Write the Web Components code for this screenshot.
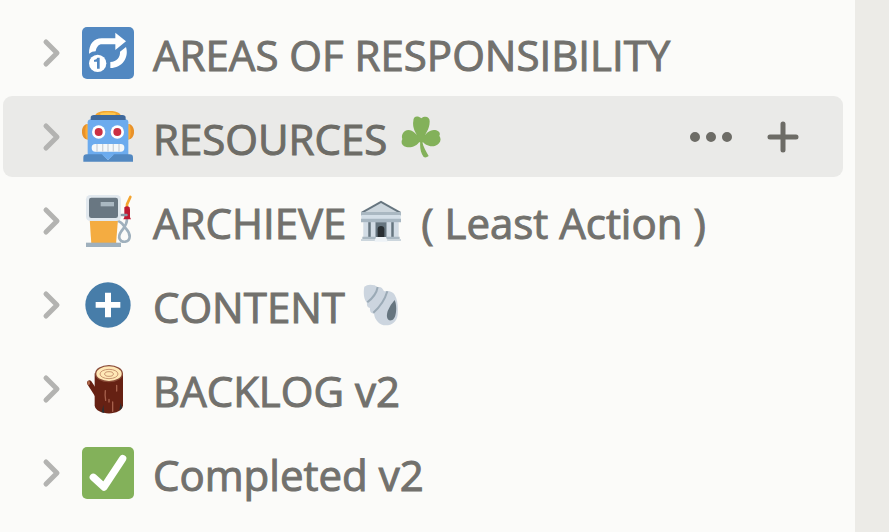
<!DOCTYPE html>
<html lang="en">
<head>
<meta charset="utf-8">
<title>Pages</title>
<style>
  body {
    margin: 0;
    font-family: "Open Sans", "Noto Sans", sans-serif;
  }
</style>
</head>
<body>
<page-sidebar>
  <page-item>
    <page-icon slot="icon" name="repeat-one"></page-icon>
    AREAS OF RESPONSIBILITY
  </page-item>
  <page-item active>
    <page-icon slot="icon" name="robot"></page-icon>
    RESOURCES <page-icon name="shamrock" inline></page-icon>
  </page-item>
  <page-item>
    <page-icon slot="icon" name="fuel"></page-icon>
    ARCHIEVE <page-icon name="bank" inline></page-icon> ( Least Action )
  </page-item>
  <page-item>
    <page-icon slot="icon" name="plus"></page-icon>
    CONTENT <page-icon name="shell" inline></page-icon>
  </page-item>
  <page-item>
    <page-icon slot="icon" name="wood"></page-icon>
    BACKLOG v2
  </page-item>
  <page-item>
    <page-icon slot="icon" name="check"></page-icon>
    Completed v2
  </page-item>
</page-sidebar>

<script>
const icons = {
  'repeat-one': `<svg viewBox="156 36 156 156">
    <rect x="156" y="36" width="156" height="156" rx="15" fill="#5288c1"/>
    <g fill="#fff">
      <path d="M177 116C177 86 192 70 215 70H256V53L288 79L256 105V88H216C205 88 200 96 197 109Q186 109 177 116Z"/>
      <path d="M288 96C298 128 276 159 241 159V141C261 140 271 126 270 110Z"/>
      <circle cx="203" cy="145" r="26"/>
    </g>
    <path d="M192 135Q201 133 202 128H209V161H201V140H192Z" fill="#5288c1"/>
  </svg>`,
  robot: `<svg viewBox="156 48 156 156">
    <ellipse cx="234" cy="64" rx="39" ry="17" fill="#f4a62f"/>
    <ellipse cx="234" cy="57" rx="24" ry="5" fill="#ffc64d"/>
    <path d="M173 87C150 88 150 132 173 134Z M295 87C318 88 318 132 295 134Z" fill="#e8922a"/>
    <path d="M173 87Q166 88 166 111Q166 132 173 134Z M295 87Q302 88 302 111Q302 132 295 134Z" fill="#ffac33"/>
    <path d="M173 82Q173 73 184 73H285Q295 73 295 82V181H173Z" fill="#6cabee"/>
    <path d="M182 75V68Q182 60 192 60H277Q287 60 287 68V75Z" fill="#3f699c"/>
    <path d="M160 200V188Q160 178 170 178H217L234 195L251 178H299Q309 178 309 188V200Z" fill="#5288c1"/>
    <path d="M215 178H253L234 195Z" fill="#6cabee"/>
    <circle cx="206" cy="111" r="20" fill="#fff"/><circle cx="262" cy="111" r="20" fill="#fff"/>
    <circle cx="206" cy="111" r="12" fill="#ca3044"/><circle cx="262" cy="111" r="12" fill="#ca3044"/>
    <rect x="185" y="147" width="98" height="23" rx="11" fill="#f5f8fa"/>
    <path d="M201 147V170M218 147V170M234 147V170M250 147V170M267 147V170" stroke="#ccd3da" stroke-width="4"/>
  </svg>`,
  fuel: `<svg viewBox="156 45 156 156">
    <path d="M262 123C276 124 279 136 288 146C303 162 303 182 286 185C269 187 262 171 273 155C282 142 291 136 291 116" fill="none" stroke="#9fb0bd" stroke-width="8"/>
    <path d="M179 117H264L258 193H184Z" fill="#f4ac41"/>
    <rect x="168" y="45" width="105" height="78" rx="13" fill="#e1e8ee"/>
    <rect x="177" y="53" width="87" height="61" rx="7" fill="#697782"/>
    <rect x="212" y="66" width="40" height="13" fill="#aab8c2"/>
    <rect x="168" y="188" width="105" height="13" fill="#9fb0bd"/>
    <path d="M291 82V73L301 51" fill="none" stroke="#f4a42f" stroke-width="8" stroke-linecap="round" stroke-linejoin="round"/>
    <path d="M283 82Q291 75 299 82L300 89V112L303 118H280L283 112Z" fill="#be1931"/>
    <rect x="272" y="101" width="21" height="8" rx="3" fill="#8899a6"/>
  </svg>`,
  plus: `<svg viewBox="156 27 156 156">
    <circle cx="234" cy="105" r="68" fill="#477da9"/>
    <path d="M225 68H243V96H271V113H243V142H225V113H197V96H225Z" fill="#fff"/>
  </svg>`,
  wood: `<svg viewBox="156 39 156 156">
    <path d="M195 110L184 94Q180 89 174 92Q168 97 174 106L195 139Z" fill="#662113"/>
    <ellipse cx="176" cy="99" rx="4" ry="6" fill="#b16b4d"/>
    <path d="M194 70V166C196 198 277 199 279 166V70Z" fill="#662113"/>
    <ellipse cx="237" cy="71" rx="42" ry="26" fill="#8a4b38"/>
    <ellipse cx="237" cy="71" rx="38" ry="22" fill="#ffe8b6"/>
    <g fill="none" stroke="#c99572" stroke-width="3">
      <ellipse cx="237" cy="72" rx="27" ry="14"/>
      <ellipse cx="237" cy="72" rx="13" ry="7"/>
    </g>
    <path d="M226 122Q224 136 227 151M260 106V123M248 156V184M237 148V156" fill="none" stroke="#a6604c" stroke-width="4" stroke-linecap="round"/>
    <path d="M215 187L220 164L223 189ZM268 181L272 158L276 174Z" fill="#292f33"/>
  </svg>`,
  check: `<svg viewBox="156 36 156 156">
    <rect x="156" y="36" width="156" height="156" rx="15" fill="#83b15a"/>
    <path d="M190 127L222 156L278 71" fill="none" stroke="#fff" stroke-width="22" stroke-linecap="round" stroke-linejoin="round"/>
  </svg>`,
  shamrock: `<svg viewBox="174 33 126 126">
    <path d="M236 106C222 88 210 69 214 48C214 33 227 31 238 40C250 31 264 36 263 50C263 73 249 88 241 103C251 83 267 71 283 76C292 79 296 86 292 92C301 106 292 118 280 122C264 127 248 119 240 107C244 126 252 139 260 153Q252 160 245 156C235 142 233 125 235 107C224 124 207 129 193 126C179 123 176 112 181 102C178 95 180 84 189 78C206 69 223 84 236 106Z" fill="#83b15a"/>
    <circle cx="238" cy="99" r="14" fill="#83b15a"/>
  </svg>`,
  bank: `<svg viewBox="63 30 126 126">
    <path d="M129 32L189 66V74H69V66Z" fill="#66757f"/>
    <path d="M129 39L177 66H81Z" fill="#ccd6dd"/>
    <path d="M77 95H181V143H77Z" fill="#b8c5cf"/>
    <path d="M69 66H189V77H69Z" fill="#aab8c2"/>
    <path d="M70 75H188V87H70Z" fill="#d4dfe8"/>
    <path d="M69 86H189V97H69Z" fill="#a8b7c2"/>
    <path d="M112 97H146V143H112Z" fill="#66757f"/>
    <path d="M119 143V118Q119 108 129 108Q139 108 139 118V143Z" fill="#292f33"/>
    <path d="M91 97H98V143H91ZM160 97H167V143H160Z" fill="#66757f"/>
    <path d="M77 97H90V143H77ZM99 97H112V143H99ZM146 97H159V143H146ZM168 97H181V143H168Z" fill="#d2dce5"/>
    <path d="M73 140H114V148H73ZM144 140H185V148H144Z" fill="#aab8c2"/>
    <path d="M69 147H112V153H69ZM146 147H189V153H146Z" fill="#ccd6dd"/>
    <path d="M114 141H144L149 155H109Z" fill="#eef3f7"/>
  </svg>`,
  shell: `<svg viewBox="78 42 126 126">
    <path d="M97 50Q108 41 128 46L137 52Q149 48 156 64Q177 59 188 74C199 92 198 117 197 134C195 154 181 166 161 166C143 166 129 151 126 131Q112 130 114 114Q103 111 105 99C94 87 94 66 97 50Z" fill="#ccd5df"/>
    <path d="M137 51Q133 76 106 97M166 64C158 91 143 112 124 128" fill="none" stroke="#9baab6" stroke-width="6"/>
    <path d="M188 90C196 108 194 148 178 151C163 153 163 137 167 123Q173 106 188 90Z" fill="#66757f"/>
  </svg>`
}

customElements.define('page-icon',
  /**
   * A pictogram, either in the icon column or within a title.
   */
  class extends HTMLElement {
    constructor () {
      super()
      this.attachShadow({ mode: 'open' })
    }

    /**
     * Draws the icon given by the name attribute.
     */
    connectedCallback () {
      this.shadowRoot.innerHTML = `
        <style>
          :host {
            display: block;
            width: 52px;
            height: 52px;
          }
          :host([inline]) {
            display: inline-block;
            width: 42px;
            height: 42px;
            margin: 0 9px 0 2px;
            vertical-align: -3px;
          }
          svg {
            display: block;
            width: 100%;
            height: 100%;
          }
        </style>
        ${icons[this.getAttribute('name')]}
      `
    }
  })

const itemTemplate = document.createElement('template')
itemTemplate.innerHTML = `
  <style>
    :host {
      display: flex;
      align-items: center;
      box-sizing: border-box;
      min-height: 81px;
      padding: 0 44px 0 36px;
      border-radius: 9px;
      color: #72716d;
    }
    :host([active]) {
      background: #eaeae8;
      color: #6d6c66;
    }
    button {
      display: block;
      flex: none;
      padding: 0;
      border: none;
      background: none;
      color: inherit;
      cursor: pointer;
    }
    svg {
      display: block;
      fill: none;
      stroke: currentColor;
      stroke-linecap: round;
      stroke-linejoin: round;
    }
    .toggle {
      color: #b3b3b1;
    }
    slot[name="icon"] {
      display: block;
      flex: none;
      margin: 0 19px;
    }
    .title {
      flex: 1;
      padding-top: 4px;
      font-size: 42px;
      font-weight: 500;
      line-height: 52px;
      white-space: nowrap;
      -webkit-text-stroke: 1px currentColor;
    }
    .actions {
      display: none;
      gap: 32px;
    }
    :host([active]) .actions {
      display: flex;
    }
  </style>
  <button class="toggle" aria-label="Expand">
    <svg width="24" height="32" viewBox="0 0 24 32" stroke-width="5"><path d="M7 5L18 16L7 27"/></svg>
  </button>
  <slot name="icon"></slot>
  <div class="title"><slot></slot></div>
  <div class="actions">
    <button aria-label="More">
      <svg width="48" height="32" viewBox="0 0 48 32" stroke-width="10"><path d="M8 16h0M24 16h0M40 16h0"/></svg>
    </button>
    <button aria-label="Add a page">
      <svg width="32" height="32" viewBox="0 0 32 32" stroke-width="5"><path d="M16 3V29M3 16H29"/></svg>
    </button>
  </div>
`

customElements.define('page-item',
  /**
   * A row of the sidebar with a toggle, an icon and a title.
   */
  class extends HTMLElement {
    constructor () {
      super()
      this.attachShadow({ mode: 'open' })
        .appendChild(itemTemplate.content.cloneNode(true))
    }
  })

const sidebarTemplate = document.createElement('template')
sidebarTemplate.innerHTML = `
  <style>
    :host {
      display: flex;
      min-height: 100vh;
      background: #ecebe7;
    }
    nav {
      flex: 1;
      display: flex;
      flex-direction: column;
      gap: 3px;
      margin-right: 34px;
      padding: 12px 12px 12px 3px;
      box-sizing: border-box;
      background: #fbfbf9;
    }
  </style>
  <nav aria-label="Pages"><slot></slot></nav>
`

customElements.define('page-sidebar',
  /**
   * The list of pages.
   */
  class extends HTMLElement {
    constructor () {
      super()
      this.attachShadow({ mode: 'open' })
        .appendChild(sidebarTemplate.content.cloneNode(true))
    }
  })
</script>
</body>
</html>
